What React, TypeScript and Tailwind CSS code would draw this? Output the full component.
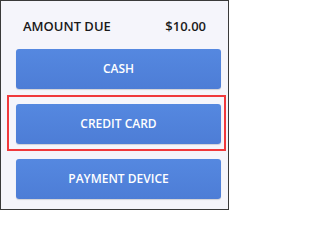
import * as React from 'react';

const buttons = ['CASH', 'CREDIT CARD', 'PAYMENT DEVICE'];

export default function App(): React.JSX.Element {
  return (
    <div
      className="relative w-[229px] h-[210px] border border-[#3a3a3a] bg-[#f5f5fb] px-[15px] pt-[17px]"
      style={{ fontFamily: '"Open Sans", "Noto Sans", sans-serif' }}
    >
      {/* Header */}
      <div className="flex items-center justify-between pl-[7px] pr-[7px] h-[18px] text-[13px] font-semibold text-[#1a1a1a]">
        <span>AMOUNT DUE</span>
        <span>$10.00</span>
      </div>

      {/* Payment options */}
      <div className="mt-[13px] flex flex-col gap-[15px]">
        {buttons.map((label) => (
          <button
            key={label}
            className="h-[40px] w-[205px] rounded-[3px] bg-gradient-to-b from-[#5588e0] to-[#4d7dd6] text-[12px] font-semibold text-white shadow-[0_1px_1px_rgba(0,0,0,0.15)]"
          >
            {label}
          </button>
        ))}
      </div>

      {/* Highlight */}
      <div className="absolute left-[6px] top-[94px] w-[219px] h-[56px] border-[2.5px] border-[#f0393c]" />
    </div>
  );
}
